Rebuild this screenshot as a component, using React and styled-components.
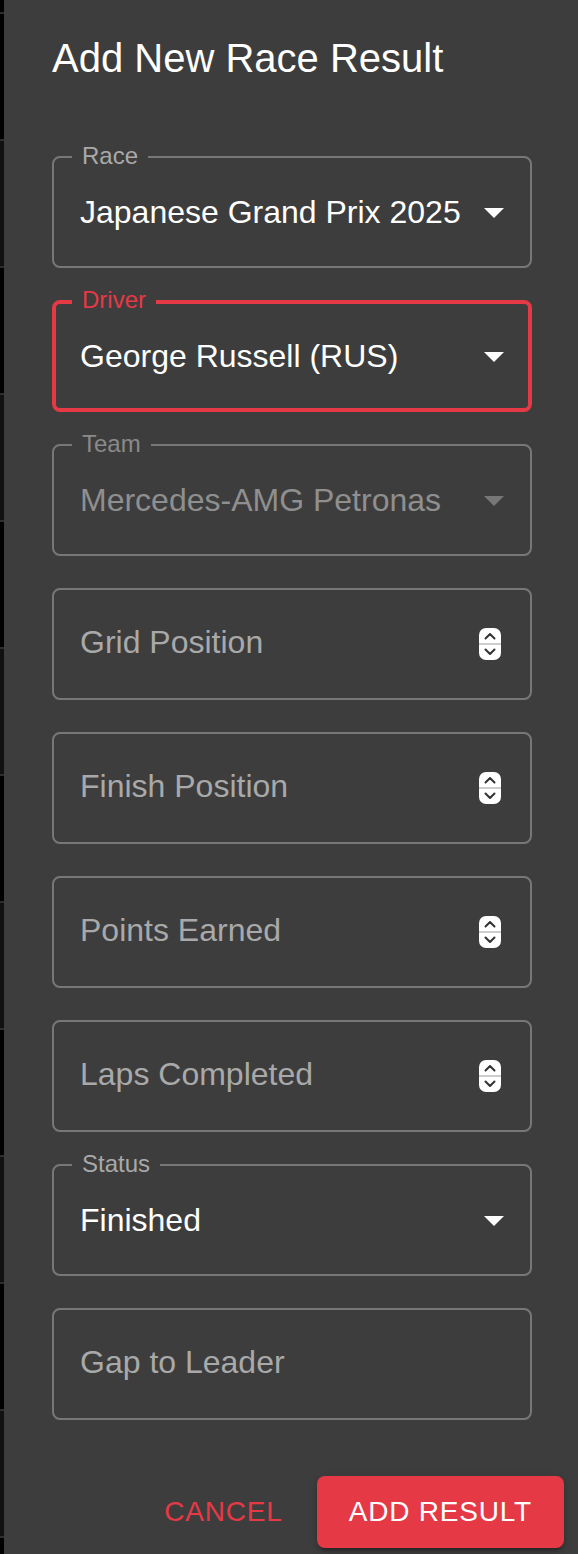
import styled, { createGlobalStyle } from "styled-components";

const RED = "#e63946";

const GlobalStyle = createGlobalStyle`
  html, body {
    margin: 0;
    padding: 0;
    background: #000;
    overflow: hidden;
  }
  body {
    font-family: "Liberation Sans", Arial, Helvetica, sans-serif;
  }
`;

const Page = styled.div`
  display: flex;
  width: 578px;
  height: 1554px;
  overflow: hidden;
`;

const Backdrop = styled.div`
  width: 4px;
  flex: none;
  display: flex;
  flex-direction: column;
  padding-top: 12px;
`;

const BackdropRow = styled.div`
  height: 125px;
  flex: none;
  background: ${({ $odd }) => ($odd ? "#111" : "#000")};
  border-top: 2px solid #2e2e2e;
`;

const Dialog = styled.div`
  width: 576px;
  flex: none;
  background: #3d3d3d;
  display: flex;
  flex-direction: column;
`;

const Title = styled.h2`
  margin: 0;
  padding: 26px 48px 0;
  font-size: 40px;
  line-height: 64px;
  font-weight: 400;
  color: #fff;
`;

const Content = styled.div`
  padding: 66px 48px 40px;
  display: flex;
  flex-direction: column;
  gap: 32px;
`;

const Field = styled.div`
  position: relative;
  height: 112px;
  box-sizing: border-box;
  border: ${({ $focused }) => ($focused ? `4px solid ${RED}` : "2px solid #777")};
  border-radius: 8px;
  display: flex;
  align-items: center;
  padding-left: ${({ $focused }) => ($focused ? 24 : 26)}px;
  padding-right: ${({ $focused }) => ($focused ? 10 : 12)}px;
`;

const Label = styled.span`
  position: absolute;
  top: ${({ $focused }) => ($focused ? -16 : -14)}px;
  left: ${({ $focused }) => ($focused ? 16 : 18)}px;
  padding: 0 10px;
  background: #3d3d3d;
  font-size: 24px;
  line-height: 24px;
  color: ${({ $focused, $disabled }) => ($focused ? RED : $disabled ? "#8a8a8a" : "#a9a9a9")};
`;

const Value = styled.span`
  flex: 1;
  font-size: 32px;
  line-height: 46px;
  padding-bottom: ${({ $muted }) => ($muted ? 4 : 0)}px;
  white-space: nowrap;
  overflow: hidden;
  color: ${({ $muted, $disabled }) => ($disabled ? "#8f8f8f" : $muted ? "#a9a9a9" : "#fff")};
`;

const IconBox = styled.span`
  width: 48px;
  height: 48px;
  flex: none;
  display: flex;
  align-items: center;
  justify-content: center;
`;

const SpinBox = styled.span`
  width: 22px;
  height: 32px;
  flex: none;
  margin-right: 17px;
  display: flex;
`;

const Actions = styled.div`
  display: flex;
  justify-content: flex-end;
  align-items: center;
  gap: 18px;
  padding: 16px 16px 16px;
`;

const TextButton = styled.button`
  background: none;
  border: none;
  padding: 12px 16px;
  font-family: inherit;
  font-size: 28px;
  letter-spacing: 0.8px;
  color: ${RED};
  text-transform: uppercase;
  cursor: pointer;
`;

const FilledButton = styled.button`
  height: 72px;
  padding: 0 32px;
  border: none;
  border-radius: 8px;
  background: ${RED};
  color: #fff;
  font-family: inherit;
  font-size: 28px;
  letter-spacing: 0.8px;
  text-transform: uppercase;
  box-shadow: 0 6px 2px -4px rgba(0, 0, 0, 0.2), 0 4px 4px 0 rgba(0, 0, 0, 0.14),
    0 2px 10px 0 rgba(0, 0, 0, 0.12);
  cursor: pointer;
`;

function ArrowDrop({ disabled }) {
  return (
    <svg width="48" height="48" viewBox="0 0 24 24">
      <path d="M7 10l5 5 5-5z" fill={disabled ? "#777" : "#fff"} />
    </svg>
  );
}

function Spinner() {
  return (
    <svg width="22" height="32" viewBox="0 0 22 32">
      <rect x="0" y="0" width="22" height="32" rx="7" fill="#fff" />
      <line x1="0" y1="16" x2="22" y2="16" stroke="#bdbdbd" strokeWidth="1.5" />
      <path d="M6.5 10.5 L11 6 L15.5 10.5" fill="none" stroke="#333" strokeWidth="2" strokeLinecap="round" strokeLinejoin="round" />
      <path d="M6.5 21.5 L11 26 L15.5 21.5" fill="none" stroke="#333" strokeWidth="2" strokeLinecap="round" strokeLinejoin="round" />
    </svg>
  );
}

const fields = [
  { kind: "select", label: "Race", value: "Japanese Grand Prix 2025" },
  { kind: "select", label: "Driver", value: "George Russell (RUS)", focused: true },
  { kind: "select", label: "Team", value: "Mercedes-AMG Petronas", disabled: true },
  { kind: "number", placeholder: "Grid Position" },
  { kind: "number", placeholder: "Finish Position" },
  { kind: "number", placeholder: "Points Earned" },
  { kind: "number", placeholder: "Laps Completed" },
  { kind: "select", label: "Status", value: "Finished" },
  { kind: "text", placeholder: "Gap to Leader" },
];

function FormField({ kind, label, value, placeholder, focused, disabled }) {
  return (
    <Field $focused={focused}>
      {label && (
        <Label $focused={focused} $disabled={disabled}>
          {label}
        </Label>
      )}
      <Value $muted={!value} $disabled={disabled}>
        {value || placeholder}
      </Value>
      {kind === "select" && (
        <IconBox>
          <ArrowDrop disabled={disabled} />
        </IconBox>
      )}
      {kind === "number" && (
        <SpinBox>
          <Spinner />
        </SpinBox>
      )}
    </Field>
  );
}

export default function App() {
  return (
    <Page>
      <GlobalStyle />
      <Backdrop>
        {Array.from({ length: 13 }).map((_, i) => (
          <BackdropRow key={i} $odd={i % 2 === 1} />
        ))}
      </Backdrop>
      <Dialog>
        <Title>Add New Race Result</Title>
        <Content>
          {fields.map((f, i) => (
            <FormField key={i} {...f} />
          ))}
        </Content>
        <Actions>
          <TextButton>Cancel</TextButton>
          <FilledButton>Add Result</FilledButton>
        </Actions>
      </Dialog>
    </Page>
  );
}
